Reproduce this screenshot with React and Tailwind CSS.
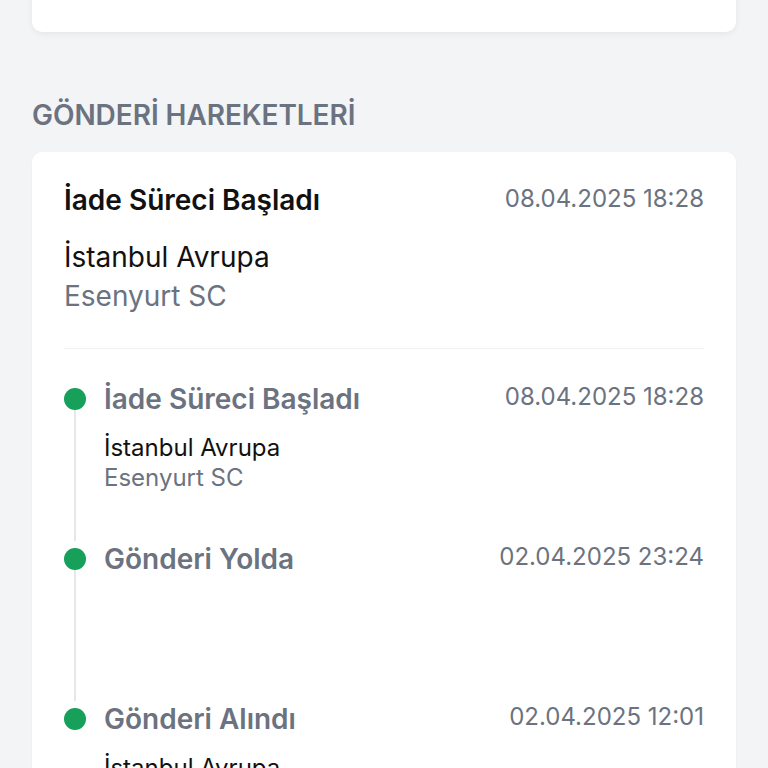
const events = [
  {
    title: 'İade Süreci Başladı',
    date: '08.04.2025 18:28',
    city: 'İstanbul Avrupa',
    branch: 'Esenyurt SC',
  },
  {
    title: 'Gönderi Yolda',
    date: '02.04.2025 23:24',
    city: '',
    branch: '',
  },
  {
    title: 'Gönderi Alındı',
    date: '02.04.2025 12:01',
    city: 'İstanbul Avrupa',
    branch: 'Esenyurt SC',
  },
];

export default function App() {
  return (
    <div className="min-h-screen bg-[#f3f4f6] px-8 font-['Inter',sans-serif] overflow-hidden">
      {/* previous card, cut off at top */}
      <div className="-mt-4 h-12 rounded-[10px] bg-white shadow-[0_2px_6px_rgba(0,0,0,0.06)]" />

      <h2 className="mt-[65px] text-[28px] leading-9 font-semibold tracking-[-0.05px] text-[#6b7280]">
        GÖNDERİ HAREKETLERİ
      </h2>

      <div className="mt-[19px] rounded-[10px] bg-white px-8 pt-[28px] shadow-[0_1px_3px_rgba(0,0,0,0.04)]">
        {/* latest status */}
        <div className="flex items-start justify-between">
          <div className="text-[28px] leading-[40px] font-semibold text-[#111]">İade Süreci Başladı</div>
          <div className="text-[24px] leading-[38px] text-[#6b7280]">08.04.2025 18:28</div>
        </div>
        <div className="mt-[18px] text-[28px] leading-[38px] text-[#111]">İstanbul Avrupa</div>
        <div className="text-[28px] leading-[40px] text-[#6b7280]">Esenyurt SC</div>

        <div className="mt-[32px] h-px bg-[#f0f1f3]" />

        {/* timeline */}
        <div className="pt-[32px]">
          {events.map((e, i) => (
            <div key={i} className="flex h-[160px]">
              <div className="flex w-[22px] flex-col items-center">
                <div className="mt-[7px] h-[22px] w-[22px] shrink-0 rounded-full bg-[#16a05a]" />
                {i < events.length - 1 && <div className="w-[2px] flex-1 bg-[#e5e7eb]" />}
              </div>
              <div className="ml-[18px] flex-1">
                <div className="flex items-start justify-between">
                  <div className="text-[28px] leading-9 font-semibold text-[#6b7280]">{e.title}</div>
                  <div className="text-[24px] leading-8 text-[#6b7280]">{e.date}</div>
                </div>
                <div className="mt-[16px] text-[24px] leading-[30px] text-[#111]">{e.city}</div>
                <div className="text-[24px] leading-[30px] text-[#6b7280]">{e.branch}</div>
              </div>
            </div>
          ))}
        </div>
      </div>
    </div>
  );
}
